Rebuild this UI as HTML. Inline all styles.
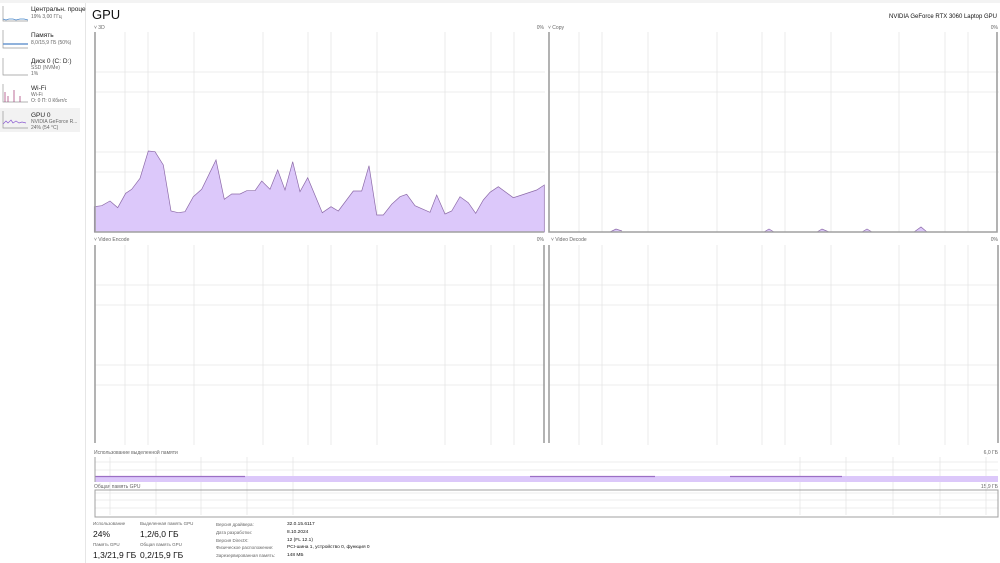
<!DOCTYPE html>
<html><head><meta charset="utf-8"><style>
body{margin:0;width:1000px;height:563px;background:#fff;font-family:"Liberation Sans","Noto Sans CJK SC",sans-serif;color:#222;position:relative;overflow:hidden}
.a{position:absolute;white-space:nowrap}
.s{font-size:5px;color:#666}
.t{font-size:6.5px;color:#222}
.big{font-size:8.5px;color:#111}
.r{text-align:right}
</style></head><body>
<div class="a" style="left:0;top:0;width:1000px;height:3px;background:#f3f3f3"></div>
<div class="a" style="left:85px;top:3px;width:1px;height:560px;background:#e6e6e6"></div>
<div class="a" style="left:0;top:108px;width:80px;height:24px;background:#f2f2f2"></div>

<svg class="a" style="left:0;top:0" width="90" height="140">
<g fill="none" stroke-width="0.7">
<path d="M3 6V21H28" stroke="#999"/><path d="M3 19l3 1 3-1 4 0 3 1 4-1 4 0 4 1" stroke="#4a86c8"/>
<path d="M3 30V48H28" stroke="#999"/><path d="M3 44H28" stroke="#6b98d0" stroke-width="1.5"/>
<path d="M3 58V75H28" stroke="#999"/>
<path d="M3 84V102H28" stroke="#999"/><path d="M5 102V92M8 102V96M14 102V90M20 102V96" stroke="#a03070"/>
<path d="M3 111V128H28" stroke="#999"/><path d="M3 124l3-3 2 2 3-3 2 3 3-2 3 2 3-1 4 1" stroke="#8a5ad0"/>
</g></svg>
<div class="a t" style="left:31px;top:6px">Центральн. проце</div>
<div class="a s" style="left:31px;top:14px">19% 3,00 ГГц</div>
<div class="a t" style="left:31px;top:32px">Память</div>
<div class="a s" style="left:31px;top:40px">8,0/15,9 ГБ (50%)</div>
<div class="a t" style="left:31px;top:58px">Диск 0 (C: D:)</div>
<div class="a s" style="left:31px;top:65px">SSD (NVMe)</div>
<div class="a s" style="left:31px;top:71px">1%</div>
<div class="a t" style="left:31px;top:85px">Wi-Fi</div>
<div class="a s" style="left:31px;top:92px">Wi-Fi</div>
<div class="a s" style="left:31px;top:98px">О: 0 П: 0 Кбит/с</div>
<div class="a t" style="left:31px;top:112px">GPU 0</div>
<div class="a s" style="left:31px;top:119px">NVIDIA GeForce R...</div>
<div class="a s" style="left:31px;top:125px">24% (54 °C)</div>

<div class="a" style="left:92px;top:7px;font-size:13px;color:#111">GPU</div>
<div class="a r" style="right:3px;top:14px;font-size:6px;color:#111">NVIDIA GeForce RTX 3060 Laptop GPU</div>
<div class="a s" style="left:94px;top:25px">˅ 3D</div>
<div class="a s r" style="right:456px;top:25px">0%</div>
<div class="a s" style="left:548px;top:25px">˅ Copy</div>
<div class="a s r" style="right:2px;top:25px">0%</div>
<div class="a s" style="left:94px;top:237px">˅ Video Encode</div>
<div class="a s r" style="right:456px;top:237px">0%</div>
<div class="a s" style="left:551px;top:237px">˅ Video Decode</div>
<div class="a s r" style="right:2px;top:237px">0%</div>
<div class="a s" style="left:94px;top:450px">Использование выделенной памяти</div>
<div class="a s r" style="right:2px;top:450px">6,0 ГБ</div>
<div class="a s" style="left:94px;top:484px">Общая память GPU</div>
<div class="a s r" style="right:2px;top:484px">15,9 ГБ</div>

<svg class="a" style="left:0;top:0" width="1000" height="563">
<defs><g id="gv" stroke="#e6e6e6" stroke-width="0.8">
<path d="M30 0V200M53 0V200M99 0V200M168 0V200M213 0V200M236 0V200M282 0V200M350 0V200M396 0V200M419 0V200"/>
<path d="M0 40H450M0 60H450M0 120H450M0 140H450"/></g></defs>
<use href="#gv" x="95" y="32"/><use href="#gv" x="549" y="32"/>
<use href="#gv" x="95" y="245"/><use href="#gv" x="549" y="245"/>
<path d="M94.3 232V206.7L101.7 205.7 110 201 117.7 207.7 125.7 193.3 131.7 189.3 140 178.3 148.3 151 155 151.7 163.3 165 171 211 178.3 212.7 185 211.7 193.3 196.7 201.7 189.3 216 160 224.3 199.3 231.7 194 240 194 246.7 190.7 255 190.7 261.7 181 270 189.3 277.7 170 285 190 292.7 161.7 300 191.7 307.7 177.7 322.3 212.7 331 206.7 338.3 211 353.3 191 361.7 191 369 165.7 376.7 215 383.3 215 391.7 204.3 400 196.7 406.7 194.3 415 205.7 430 212.3 436.7 195 445 214 451.7 211 460 196.7 468.3 202.7 475.7 213.3 483.3 200 490 192.3 498.3 186.7 513.3 197.7 521.7 195 536.7 190 544.3 185V232Z" fill="#dcc8fa" stroke="#8c6aa8" stroke-width="0.7"/>
<path d="M610 232l6-3 6 2M764 232l5-3 5 3M817 232l5-3 7 3M862 232l5-3 5 3M914 232l7-5 6 5" fill="#dcc8fa" stroke="#8c6aa8" stroke-width="0.7"/>
<g stroke="#a0a0a0" fill="none">
<path d="M95 32V232H544" stroke-width="1.6"/>
<path d="M549 32V232H997V32" stroke-width="1.6"/>
<path d="M95 245V443" stroke-width="1.6"/><path d="M544 245V443" stroke-width="1.6"/>
<path d="M549 245V443" stroke-width="1.6"/><path d="M998 245V443" stroke-width="1.6"/>
</g>
<g stroke="#e6e6e6" stroke-width="0.8"><path d="M95 462H998M95 470H998M95 493H998M95 500H998M95 508H998M110 457V515M156 457V515M201 457V515M247 457V515M293 457V515M800 457V515M846 457V515M893 457V515M940 457V515M986 457V515"/></g>
<rect x="95" y="476" width="903" height="6" fill="#dcc8fa"/>
<path d="M95 476.5H245M530 476.5H655M730 476.5H842" stroke="#8c5ab8" stroke-width="1.2" opacity="0.8"/>
<path d="M95 457V482" stroke="#a0a0a0" stroke-width="1"/>
<rect x="95" y="490" width="903" height="27" fill="none" stroke="#a0a0a0" stroke-width="1"/>
</svg>

<div class="a s" style="left:93px;top:521px;font-size:4.5px">Использование</div>
<div class="a big" style="left:93px;top:529px">24%</div>
<div class="a s" style="left:93px;top:542px;font-size:4.5px">Память GPU</div>
<div class="a big" style="left:93px;top:550px">1,3/21,9 ГБ</div>
<div class="a s" style="left:140px;top:521px;font-size:4.5px">Выделенная память GPU</div>
<div class="a big" style="left:140px;top:529px">1,2/6,0 ГБ</div>
<div class="a s" style="left:140px;top:542px;font-size:4.5px">Общая память GPU</div>
<div class="a big" style="left:140px;top:550px">0,2/15,9 ГБ</div>
<div class="a s" style="left:216px;top:521px;line-height:7.8px;font-size:4.5px">Версия драйвера:<br>Дата разработки:<br>Версия DirectX:<br>Физическое расположение:<br>Зарезервированная память:</div>
<div class="a s" style="left:287px;top:521px;line-height:7.8px;color:#111;font-size:4.8px">32.0.15.6117<br>8.10.2024<br>12 (FL 12.1)<br>PCI-шина 1, устройство 0, функция 0<br>148 МБ</div>
</body></html>
